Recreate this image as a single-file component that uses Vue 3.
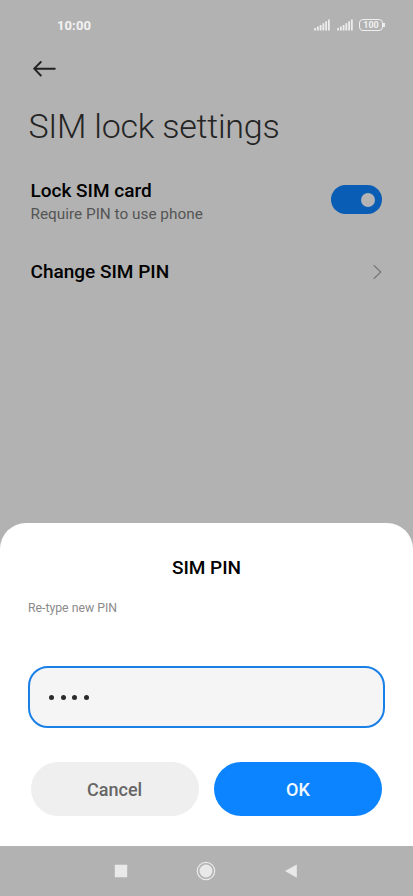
<template>
  <div class="screen">
    <header class="status-bar">
      <span class="clock">10:00</span>
      <div class="status-icons">
        <svg v-for="n in 2" :key="n" class="signal" width="16" height="12" viewBox="0 0 16 12">
          <rect
            v-for="(h, i) in signalBars"
            :key="i"
            :x="i * 2.75 + 0.2"
            :y="11.5 - h"
            width="1.8"
            :height="h"
          />
        </svg>
        <div class="battery">
          <span class="battery-level">100</span>
        </div>
      </div>
    </header>

    <nav class="toolbar">
      <svg class="back" width="24" height="18" viewBox="0 0 24 18">
        <path d="M21.8 8.7H1.3M7.8 2L1.2 8.7l6.6 6.8" />
      </svg>
    </nav>

    <h1 class="page-title">SIM lock settings</h1>

    <section class="settings">
      <div class="row row-lock">
        <div class="labels">
          <div class="row-title">Lock SIM card</div>
          <div class="row-summary">Require PIN to use phone</div>
        </div>
        <button class="toggle" :class="{ on: locked }" @click="locked = !locked">
          <span class="knob"></span>
        </button>
      </div>
      <div class="row row-change">
        <div class="row-title">Change SIM PIN</div>
        <svg class="chevron" width="10" height="16" viewBox="0 0 10 16">
          <path d="M1.7 1.2L8.8 8l-7.1 6.8" />
        </svg>
      </div>
    </section>

    <section class="sheet">
      <h2 class="sheet-title">SIM PIN</h2>
      <p class="hint">Re-type new PIN</p>
      <div class="pin-field">
        <span v-for="n in pinLength" :key="n" class="dot"></span>
      </div>
      <div class="actions">
        <button class="btn cancel">Cancel</button>
        <button class="btn ok">OK</button>
      </div>
    </section>

    <footer class="nav-bar">
      <svg width="14" height="14" viewBox="0 0 14 14">
        <rect x="0.8" y="0.8" width="12.4" height="12.4" rx="0.5" />
      </svg>
      <svg width="20" height="20" viewBox="0 0 20 20">
        <circle class="ring" cx="10" cy="10" r="8.7" />
        <circle cx="10" cy="10" r="6.5" />
      </svg>
      <svg width="14" height="14" viewBox="0 0 14 14">
        <path d="M12.8 0.4v13.4L1 7.1z" />
      </svg>
    </footer>
  </div>
</template>

<script setup>
import { ref } from 'vue'

const locked = ref(true)
const pinLength = ref(4)
const signalBars = [2.5, 4, 5.5, 7.3, 9.2, 11]
</script>

<style>
body {
  margin: 0;
  background: #b2b2b2;
}
</style>

<style scoped>
.screen {
  display: flex;
  flex-direction: column;
  width: 413px;
  height: 896px;
  overflow: hidden;
  background: #b2b2b2;
  color: #000;
  font-family: Roboto, "Liberation Sans", sans-serif;
}

.screen * {
  box-sizing: border-box;
}

button {
  border: 0;
  padding: 0;
  font-family: inherit;
}

/* status bar */
.status-bar {
  display: flex;
  align-items: center;
  justify-content: space-between;
  height: 49px;
  padding: 0 30px 0 57px;
}

.clock {
  padding-top: 1px;
  font-size: 13px;
  font-weight: 700;
  letter-spacing: 0.1px;
  color: #f3f3f3;
}

.status-icons {
  display: flex;
  align-items: center;
}

.signal {
  margin-right: 7px;
  fill: #ededed;
}

.signal + .battery {
  margin-left: -1px;
}

.battery {
  position: relative;
  display: flex;
  align-items: center;
  justify-content: center;
  width: 24px;
  height: 12px;
  border: 1.5px solid #f0f0f0;
  border-radius: 4px;
}

.battery::after {
  content: "";
  position: absolute;
  right: -3px;
  top: 3px;
  width: 2px;
  height: 4px;
  background: #ededed;
}

.battery-level {
  padding-top: 1px;
  font-size: 9px;
  line-height: 9px;
  font-weight: 700;
  color: #f0f0f0;
}

/* page */
.toolbar {
  display: flex;
  align-items: center;
  height: 40px;
  padding-left: 33px;
}

.back {
  fill: none;
  stroke: #222;
  stroke-width: 1.9;
  stroke-linecap: round;
  stroke-linejoin: round;
}

.page-title {
  margin: 16px 0 0 28.4px;
  font-size: 34px;
  line-height: 42px;
  font-weight: 300;
  letter-spacing: -0.25px;
  color: #242424;
  white-space: nowrap;
}

.settings {
  flex: 1;
  padding: 26px 31px 0 30.5px;
}

.row {
  display: flex;
  align-items: center;
  justify-content: space-between;
}

.row-lock {
  height: 56px;
}

.row-change {
  height: 24px;
  margin-top: 31px;
}

.row-title {
  font-size: 19px;
  line-height: 24px;
  font-weight: 500;
  white-space: nowrap;
}

.row-summary {
  font-size: 15.35px;
  line-height: 20px;
  margin-top: 1px;
  color: #555;
}

.toggle {
  display: flex;
  align-items: center;
  width: 51px;
  height: 29px;
  margin-bottom: 3px;
  padding: 0 7px;
  border-radius: 15px;
  background: #8c8c8c;
}

.toggle.on {
  justify-content: flex-end;
  background: #095db5;
}

.knob {
  width: 14px;
  height: 14px;
  border-radius: 50%;
  background: #b4b4b4;
}

.chevron {
  fill: none;
  stroke: #7b7b7b;
  stroke-width: 1.3;
}

/* bottom sheet */
.sheet {
  height: 322.6px;
  padding: 32.6px 28px 0;
  border-radius: 26px 26px 0 0;
  background: #fff;
}

.sheet-title {
  margin: 0;
  font-size: 19px;
  line-height: 24px;
  font-weight: 500;
  text-align: center;
}

.hint {
  margin: 20px 0 0;
  font-size: 12.25px;
  line-height: 16px;
  color: #8a8a8a;
}

.pin-field {
  display: flex;
  align-items: center;
  gap: 6.5px;
  height: 62px;
  margin-top: 50px;
  padding-left: 19px;
  border: 2px solid #1a80e8;
  border-radius: 20px;
  background: #f5f5f5;
}

.dot {
  width: 5px;
  height: 5px;
  border-radius: 50%;
  background: #2b2b2b;
}

.actions {
  display: flex;
  gap: 15px;
  margin: 34px 3px 0 2.5px;
}

.btn {
  flex: 1;
  height: 54px;
  border-radius: 27px;
  font-size: 18px;
  font-weight: 500;
}

.cancel {
  background: #efefef;
  color: #666;
}

.ok {
  background: #0d84ff;
  color: #f3faff;
}

/* navigation bar */
.nav-bar {
  display: flex;
  align-items: center;
  justify-content: space-between;
  height: 50px;
  padding: 0 115px 0 114px;
  fill: #e9e9e9;
}

.ring {
  fill: none;
  stroke: #e9e9e9;
  stroke-width: 1.2;
}
</style>
